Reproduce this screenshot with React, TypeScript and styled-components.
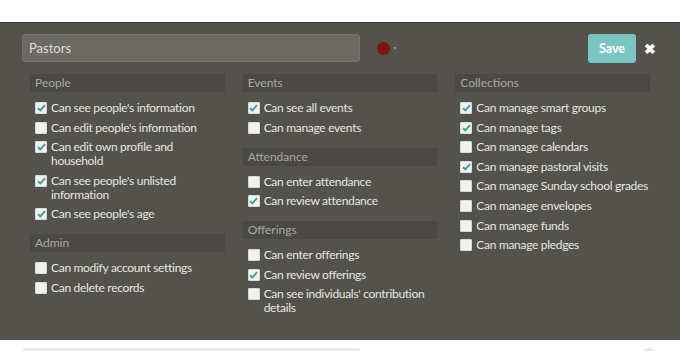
import React from 'react'
import styled, { createGlobalStyle } from 'styled-components'

const GlobalStyle = createGlobalStyle`
  html, body {
    margin: 0;
    padding: 0;
    background: #ffffff;
    font-family: Lato, "Open Sans", sans-serif;
  }
`

type Perm = { label: string; checked?: boolean }
type Section = { title: string; perms: Perm[] }

const columns: Section[][] = [
  [
    {
      title: 'People',
      perms: [
        { label: "Can see people's information", checked: true },
        { label: "Can edit people's information" },
        { label: 'Can edit own profile and household', checked: true },
        { label: "Can see people's unlisted information", checked: true },
        { label: "Can see people's age", checked: true },
      ],
    },
    {
      title: 'Admin',
      perms: [{ label: 'Can modify account settings' }, { label: 'Can delete records' }],
    },
  ],
  [
    {
      title: 'Events',
      perms: [{ label: 'Can see all events', checked: true }, { label: 'Can manage events' }],
    },
    {
      title: 'Attendance',
      perms: [{ label: 'Can enter attendance' }, { label: 'Can review attendance', checked: true }],
    },
    {
      title: 'Offerings',
      perms: [
        { label: 'Can enter offerings' },
        { label: 'Can review offerings', checked: true },
        { label: "Can see individuals' contribution details" },
      ],
    },
  ],
  [
    {
      title: 'Collections',
      perms: [
        { label: 'Can manage smart groups', checked: true },
        { label: 'Can manage tags', checked: true },
        { label: 'Can manage calendars' },
        { label: 'Can manage pastoral visits', checked: true },
        { label: 'Can manage Sunday school grades' },
        { label: 'Can manage envelopes' },
        { label: 'Can manage funds' },
        { label: 'Can manage pledges' },
      ],
    },
  ],
]

const Page = styled.div`
  padding-top: 22px;
`

const Panel = styled.div`
  background: #53524d;
  border-top: 1px solid #3a3a36;
  padding: 10px 22px 25px;
`

const TopRow = styled.div`
  display: flex;
  align-items: center;
  height: 30px;
`

const NameInput = styled.div`
  box-sizing: border-box;
  width: 338px;
  height: 28px;
  background: #6b6a65;
  border: 1px solid #767570;
  border-radius: 3px;
  color: #dcdcd6;
  font-size: 13px;
  line-height: 26px;
  padding-left: 6px;
`

const ColorPicker = styled.div`
  display: flex;
  align-items: center;
  margin-left: 17px;
  gap: 3px;
`

const Dot = styled.span<{ color: string }>`
  width: 13px;
  height: 13px;
  border-radius: 50%;
  background: ${({ color }) => color};
`

const Caret = styled.span`
  width: 0;
  height: 0;
  border-left: 2.5px solid transparent;
  border-right: 2.5px solid transparent;
  border-top: 3px solid #8a8984;
`

const Spacer = styled.div`
  flex: 1;
`

const SaveButton = styled.button`
  width: 48px;
  height: 29px;
  background: #7cc3c3;
  border: none;
  border-radius: 3px;
  color: #ffffff;
  font-family: Lato, sans-serif;
  font-weight: 700;
  font-size: 12.5px;
`

const Close = styled.span`
  width: 16px;
  margin-left: 6px;
  text-align: center;
  color: #ffffff;
  font-size: 14px;
  font-weight: 700;
`

const Grid = styled.div`
  display: grid;
  grid-template-columns: repeat(3, 1fr);
  column-gap: 18px;
  margin: 11px 8px 0;
`

const Column = styled.div`
  display: flex;
  flex-direction: column;
  gap: 13px;
`

const SectionBox = styled.div``

const Header = styled.div`
  height: 18px;
  line-height: 18px;
  background: #4a4945;
  color: #a9a9a2;
  font-size: 12px;
  padding-left: 5px;
  margin-bottom: 9px;
`

const List = styled.div`
  display: flex;
  flex-direction: column;
  gap: 5.6px;
  padding-left: 5px;
`

const Row = styled.label`
  display: flex;
  align-items: flex-start;
  color: #e6e6e0;
  font-size: 12px;
  letter-spacing: -0.3px;
  line-height: 14px;
`

const Box = styled.span`
  flex: none;
  box-sizing: border-box;
  width: 12px;
  height: 12px;
  margin-top: 1px;
  margin-right: 4px;
  background: #f1f1ef;
  border: 1px solid #d8d8d4;
  border-radius: 1px;
  display: flex;
  align-items: center;
  justify-content: center;
`

const Below = styled.div`
  display: flex;
  align-items: flex-start;
  justify-content: space-between;
  padding: 8px 24px 0 22px;
`

const Ghost = styled.div`
  width: 338px;
  height: 10px;
  background: #ebebea;
  border-radius: 3px;
`

const GhostDot = styled.div`
  width: 14px;
  height: 14px;
  border-radius: 50%;
  background: #e6e6e6;
`

const Check = () => (
  <svg width="9" height="8" viewBox="0 0 9 8">
    <path d="M1 4.2 L3.4 6.4 L8 1.2" fill="none" stroke="#3e9c9c" strokeWidth="1.9" />
  </svg>
)

export default function App() {
  return (
    <Page>
      <GlobalStyle />
      <Panel>
        <TopRow>
          <NameInput>Pastors</NameInput>
          <ColorPicker>
            <Dot color="#7d1510" />
            <Caret />
          </ColorPicker>
          <Spacer />
          <SaveButton>Save</SaveButton>
          <Close>✖</Close>
        </TopRow>
        <Grid>
          {columns.map((sections, ci) => (
            <Column key={ci}>
              {sections.map((s) => (
                <SectionBox key={s.title}>
                  <Header>{s.title}</Header>
                  <List>
                    {s.perms.map((p) => (
                      <Row key={p.label}>
                        <Box>{p.checked && <Check />}</Box>
                        <span>{p.label}</span>
                      </Row>
                    ))}
                  </List>
                </SectionBox>
              ))}
            </Column>
          ))}
        </Grid>
      </Panel>
      <Below>
        <Ghost />
        <GhostDot />
      </Below>
    </Page>
  )
}
